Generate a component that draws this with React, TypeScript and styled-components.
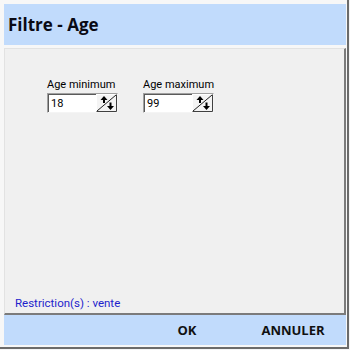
import * as React from "react";
import styled, { createGlobalStyle } from "styled-components";

const GlobalStyle = createGlobalStyle`
  html, body {
    margin: 0;
    padding: 0;
    background: #f4f4f4;
  }
  * {
    box-sizing: border-box;
  }
`;

const Frame = styled.div`
  width: 349px;
  height: 349px;
  padding: 4px 1px 2px 4px;
  border-right: 2px solid #6b6b6b;
  border-bottom: 2px solid #6b6b6b;
  background: #f7f7f7;
  display: flex;
  flex-direction: column;
`;

const Header = styled.div`
  height: 41px;
  flex-shrink: 0;
  background: #c1dbfc;
  display: flex;
  align-items: center;
  padding-left: 4px;
  font-family: "Open Sans", sans-serif;
  font-weight: 700;
  font-size: 17px;
  color: #0a0a14;
`;

const Body = styled.div`
  margin-top: 3px;
  flex: 1;
  background: #f0f0f0;
  border-top: 1px solid #e2e2e2;
  border-left: 1px solid #e2e2e2;
  border-right: 2px solid #7b7b7b;
  border-bottom: 2px solid #7b7b7b;
  display: flex;
  flex-direction: column;
  justify-content: space-between;
`;

const FieldsRow = styled.div`
  display: flex;
  gap: 25px;
  padding: 29px 0 0 42px;
`;

const Field = styled.div`
  display: flex;
  flex-direction: column;
  width: 71px;
`;

const Label = styled.label`
  font-family: Roboto, sans-serif;
  font-size: 11px;
  line-height: 13px;
  color: #000;
  margin-bottom: 2px;
  white-space: nowrap;
`;

const NumberBox = styled.div`
  height: 20px;
  background: #fff;
  border-top: 1px solid #a0a0a0;
  border-left: 1px solid #a0a0a0;
  border-right: 1px solid #f4f4f4;
  border-bottom: 1px solid #f4f4f4;
  box-shadow: inset 1px 1px 0 #5a5a5a;
  display: flex;
  align-items: center;
  padding: 0 0 0 3px;
`;

const Value = styled.span`
  flex: 1;
  font-family: Roboto, sans-serif;
  font-size: 11px;
  color: #000;
`;

const Restriction = styled.div`
  padding: 0 0 3px 10px;
  font-family: Roboto, sans-serif;
  font-size: 11.5px;
  line-height: 14px;
  color: #1e1ecc;
`;

const Footer = styled.div`
  height: 30px;
  flex-shrink: 0;
  background: #c1dbfc;
  display: flex;
  align-items: center;
  justify-content: flex-end;
  gap: 18px;
  padding-right: 9px;
`;

const FooterButton = styled.button`
  width: 88px;
  height: 26px;
  border: none;
  background: transparent;
  padding: 0;
  font-family: "Open Sans", sans-serif;
  font-weight: 700;
  font-size: 13px;
  color: #111;
  cursor: pointer;
`;

function Spinner() {
  return (
    <svg width="21" height="18" viewBox="0 0 21 18" style={{ display: "block" }}>
      <rect x="0" y="0" width="21" height="18" fill="#f4f4f4" />
      <path d="M0.5 17.5 V0.5 H20.5" stroke="#ffffff" fill="none" />
      <path d="M20.5 0.5 V17.5 H0.5" stroke="#404040" fill="none" />
      <path d="M1 17 L20 1" stroke="#222" strokeWidth="1" />
      <path d="M8 3.5 V9" stroke="#000" strokeWidth="2" />
      <path d="M4.5 6 L8 2 L11.5 6 Z" fill="#000" />
      <path d="M14.5 8.5 V13" stroke="#000" strokeWidth="2" />
      <path d="M11 12 L14.5 16 L18 12 Z" fill="#000" />
    </svg>
  );
}

function AgeField({ label, value }: { label: string; value: string }) {
  return (
    <Field>
      <Label>{label}</Label>
      <NumberBox>
        <Value>{value}</Value>
        <Spinner />
      </NumberBox>
    </Field>
  );
}

export default function App() {
  return (
    <>
      <GlobalStyle />
      <Frame>
        <Header>Filtre - Age</Header>
        <Body>
          <FieldsRow>
            <AgeField label="Age minimum" value="18" />
            <AgeField label="Age maximum" value="99" />
          </FieldsRow>
          <Restriction>Restriction(s) : vente</Restriction>
        </Body>
        <Footer>
          <FooterButton>OK</FooterButton>
          <FooterButton>ANNULER</FooterButton>
        </Footer>
      </Frame>
    </>
  );
}
